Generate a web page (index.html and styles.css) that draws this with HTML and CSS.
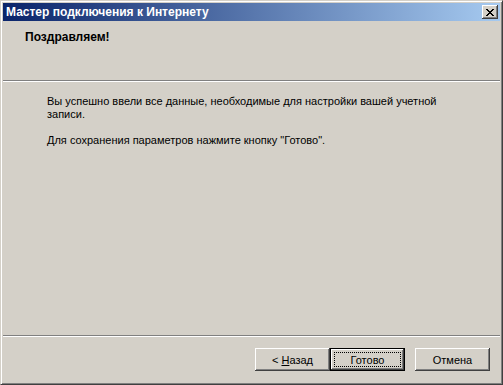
FILE: index.html
```html
<!DOCTYPE html>
<html lang="ru">
<head>
    <meta charset="UTF-8">
    <title>Мастер подключения к Интернету</title>
    <link rel="stylesheet" href="styles.css">
</head>
<body>

<div class="window">
    <div class="titlebar">
        <span class="title">Мастер подключения к Интернету</span>
        <button class="close-btn" aria-label="Закрыть">
            <svg width="8" height="7" viewBox="0 0 8 7">
                <path d="M0 0h2v1h1v1h2v-1h1v-1h2v1h-1v1h-1v1h-1v1h1v1h1v1h1v1h-2v-1h-1v-1h-2v1h-1v1h-2v-1h1v-1h1v-1h1v-1h-1v-1h-1v-1h-1z" fill="#000"/>
            </svg>
        </button>
    </div>

    <div class="client">
        <div class="wizard-header">
            <div class="heading">Поздравляем!</div>
        </div>
        <div class="etched"></div>

        <div class="wizard-body">
            <p>Вы успешно ввели все данные, необходимые для настройки вашей учетной записи.</p>
            <p>Для сохранения параметров нажмите кнопку "Готово".</p>
        </div>

        <div class="etched"></div>
        <div class="wizard-footer">
            <button class="btn">&lt; <u>Н</u>азад</button>
            <button class="btn default"><span class="focus">Готово</span></button>
            <button class="btn cancel">Отмена</button>
        </div>
    </div>
</div>

</body>
</html>
```

FILE: styles.css
```css
* {
    box-sizing: border-box;
}
html, body {
    margin: 0;
    padding: 0;
}
body {
    font-family: "Liberation Sans", Arial, sans-serif;
    font-size: 11px;
    background: #d4d0c8;
}
.window {
    width: 503px;
    height: 385px;
    display: flex;
    flex-direction: column;
    background: #d4d0c8;
    border-top: 1px solid #d4d0c8;
    border-left: 1px solid #d4d0c8;
    border-right: 1px solid #404040;
    border-bottom: 1px solid #404040;
    box-shadow: inset 1px 1px 0 #fff, inset -1px -1px 0 #808080;
    padding: 2px;
}
.titlebar {
    height: 18px;
    display: flex;
    align-items: center;
    justify-content: space-between;
    background: linear-gradient(to right, #0a246a, #a6caf0);
    padding: 0 2px 0 3px;
}
.title {
    color: #fff;
    font-weight: bold;
    font-size: 12px;
}
.close-btn {
    width: 16px;
    height: 14px;
    padding: 0;
    margin: 0;
    display: flex;
    align-items: center;
    justify-content: center;
    background: #d4d0c8;
    border: none;
    box-shadow: inset -1px -1px 0 #404040, inset 1px 1px 0 #fff, inset -2px -2px 0 #808080, inset 2px 2px 0 #d4d0c8;
}
.client {
    flex: 1;
    display: flex;
    flex-direction: column;
}
.wizard-header {
    height: 59px;
    padding: 10px 0 0 22px;
}
.heading {
    font-weight: bold;
    font-size: 12px;
    line-height: 13px;
}
.etched {
    height: 2px;
    border-top: 1px solid #808080;
    border-bottom: 1px solid #fff;
}
.wizard-body {
    flex: 1;
    padding: 13px 60px 0 44px;
}
.wizard-body p {
    margin: 0 0 13px;
    line-height: 13px;
    color: #000;
}
.wizard-footer {
    height: 45px;
    display: flex;
    justify-content: flex-end;
    padding: 11px 10px 0 0;
}
.btn {
    width: 75px;
    height: 23px;
    padding: 0;
    font-family: "Liberation Sans", Arial, sans-serif;
    font-size: 11px;
    color: #000;
    background: #d4d0c8;
    border: none;
    box-shadow: inset -1px -1px 0 #404040, inset 1px 1px 0 #fff, inset -2px -2px 0 #808080, inset 2px 2px 0 #d4d0c8;
}
.btn.default {
    border: 1px solid #000;
    box-shadow: inset -1px -1px 0 #404040, inset 1px 1px 0 #fff, inset -2px -2px 0 #808080;
    display: flex;
    padding: 3px;
}
.btn .focus {
    flex: 1;
    display: flex;
    align-items: center;
    justify-content: center;
    border: 1px dotted #000;
}
.btn.cancel {
    margin-left: 10px;
}
```
